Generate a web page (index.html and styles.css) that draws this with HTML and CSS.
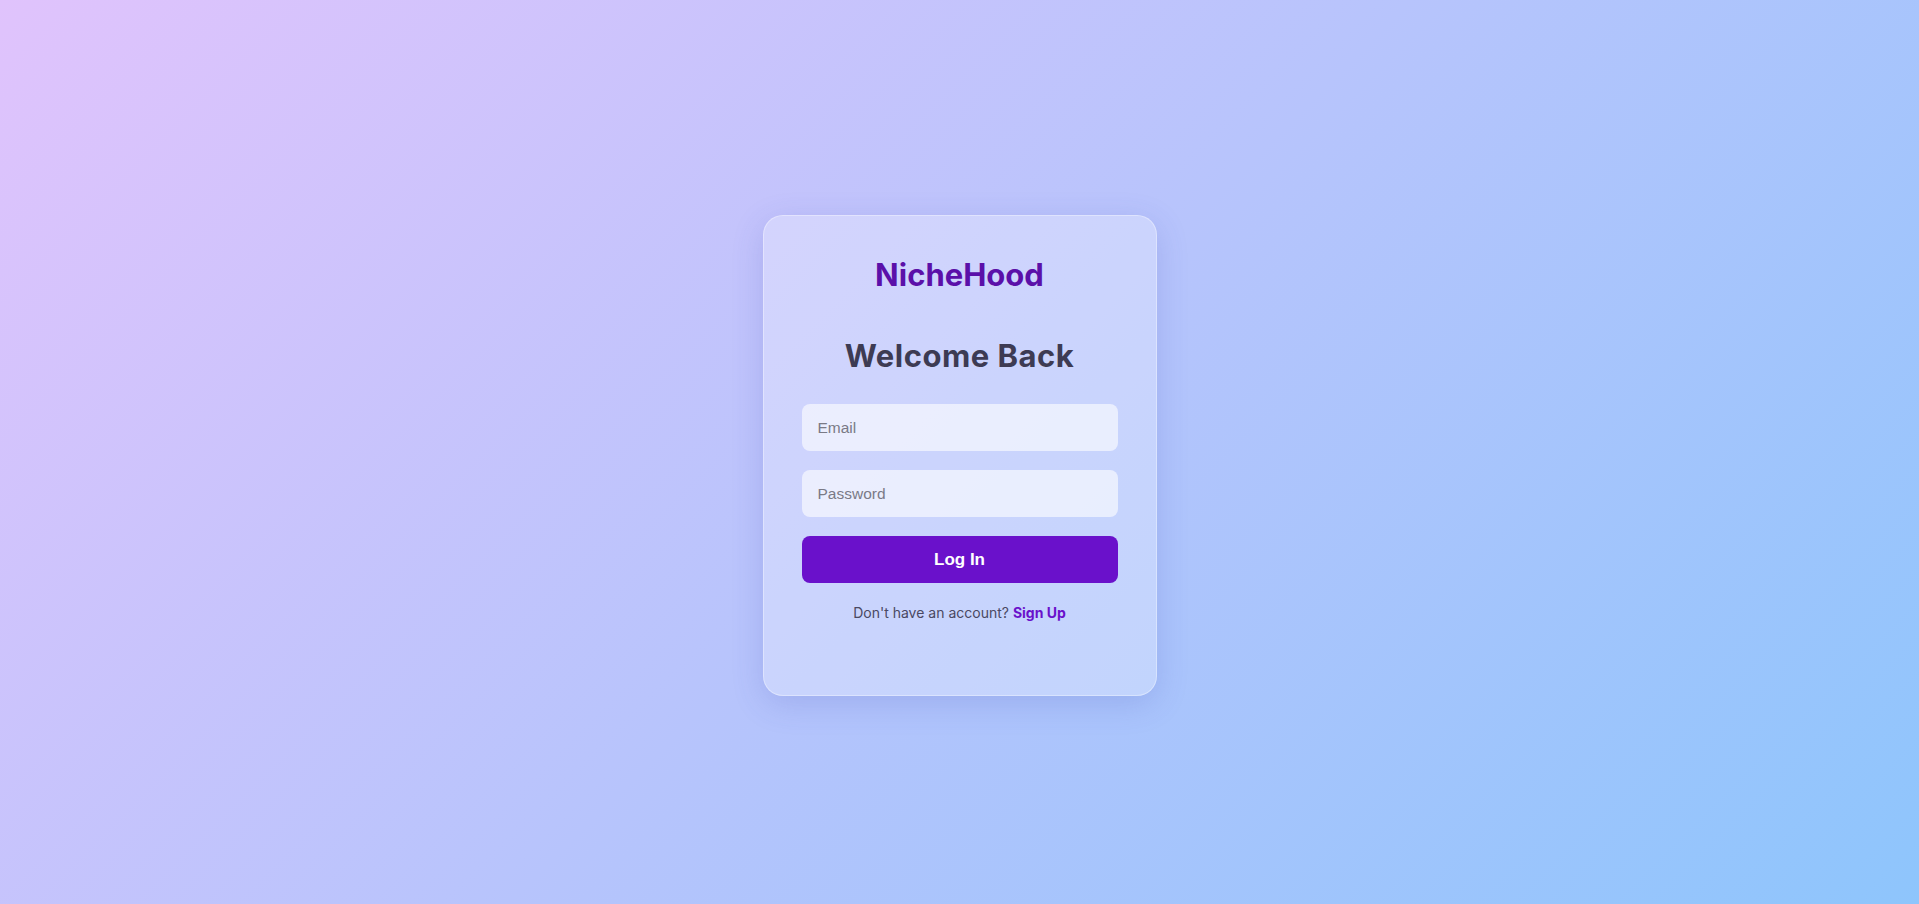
FILE: index.html
```html
<!DOCTYPE html>
<html lang="en">
<head>
<meta charset="utf-8">
<title>NicheHood - Log In</title>
<link rel="stylesheet" href="styles.css">
</head>
<body>
  <main class="card">
    <div class="logo">NicheHood</div>
    <h1 class="title">Welcome Back</h1>
    <form class="form">
      <input class="field" type="email" placeholder="Email">
      <input class="field" type="password" placeholder="Password">
      <button class="btn" type="button">Log In</button>
    </form>
    <p class="signup">Don't have an account? <a href="#" class="signup-link">Sign Up</a></p>
  </main>
</body>
</html>
```

FILE: styles.css
```css
* { box-sizing: border-box; }

html, body { margin: 0; padding: 0; }

body {
  min-height: 904px;
  height: 100vh;
  display: flex;
  align-items: center;
  justify-content: center;
  background: linear-gradient(135deg, #e0c3fc 0%, #8ec5fc 100%);
  font-family: "Inter", "Open Sans", sans-serif;
}

.card {
  width: 394px;
  margin-top: 7px;
  padding: 40px 38px 72px;
  border-radius: 20px;
  background: rgba(255, 255, 255, 0.28);
  border: 1px solid rgba(255, 255, 255, 0.35);
  box-shadow: 0 8px 32px rgba(60, 70, 180, 0.18);
  text-align: center;
}

.logo {
  font-size: 31px;
  line-height: 38px;
  font-weight: 700;
  color: #5b10a9;
  letter-spacing: 0;
}

.title {
  margin: 43px 0 0;
  font-size: 31px;
  line-height: 38px;
  font-weight: 700;
  color: #3d3b53;
  letter-spacing: 0.5px;
}

.form {
  margin-top: 29px;
  display: flex;
  flex-direction: column;
  gap: 19px;
}

.field {
  height: 47px;
  width: 100%;
  border: none;
  border-radius: 8px;
  padding: 0 16px;
  background: rgba(255, 255, 255, 0.6);
  font-family: "Liberation Sans", Arial, sans-serif;
  font-size: 15.5px;
  color: #333;
  outline: none;
}

.field::placeholder { color: #7a7a86; }

.btn {
  height: 47px;
  width: 100%;
  border: none;
  border-radius: 8px;
  background: #6a11cb;
  color: #fff;
  font-family: "Liberation Sans", Arial, sans-serif;
  font-weight: 700;
  font-size: 17px;
  cursor: pointer;
}

.signup {
  margin: 19px 0 0;
  font-size: 14px;
  line-height: 21px;
  color: #4a4862;
}

.signup-link {
  color: #6a11cb;
  font-weight: 700;
  text-decoration: none;
}
```
